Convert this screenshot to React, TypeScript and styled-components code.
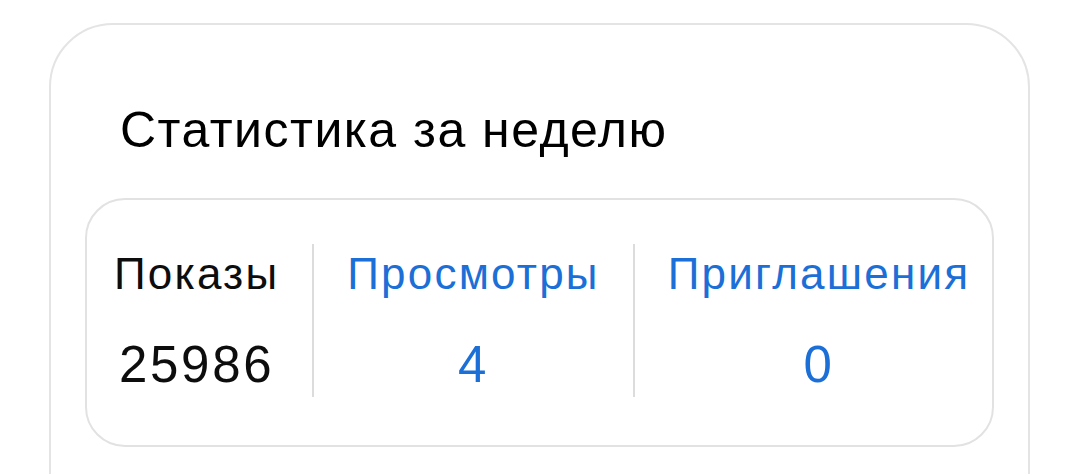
import React from "react";
import styled, { createGlobalStyle } from "styled-components";

const GlobalStyle = createGlobalStyle`
  html, body {
    margin: 0;
    padding: 0;
    background: #ffffff;
    overflow: hidden;
  }
  body {
    font-family: "Liberation Sans", Arial, sans-serif;
  }
`;

const Page = styled.div`
  padding: 23px 49px 0 49px;
  height: 474px;
  box-sizing: border-box;
`;

const Card = styled.section`
  border: 2px solid #e4e4e4;
  border-radius: 64px;
  padding: 80px 34px 0 34px;
  min-height: 520px;
  box-sizing: border-box;
`;

const Title = styled.h2`
  margin: 0 0 43px 0;
  padding-left: 35px;
  font-size: 50px;
  line-height: 50px;
  font-weight: 400;
  letter-spacing: 1.5px;
  color: #000;
`;

const StatsBox = styled.div`
  display: flex;
  border: 2px solid #e2e2e2;
  border-radius: 40px;
  padding: 44px 0 48px 0;
`;

const Column = styled.div<{ $divider?: boolean; $color: string }>`
  flex: 1 1 auto;
  display: flex;
  flex-direction: column;
  align-items: center;
  padding: 9px 33px 7px 33px;
  border-left: 2px solid ${(p) => (p.$divider ? "#dcdcdc" : "transparent")};
  color: ${(p) => p.$color};

  &:first-child {
    padding-left: 27px;
    border-left: none;
  }
`;

const Label = styled.div`
  font-size: 44px;
  line-height: 42px;
  letter-spacing: 2.2px;
  white-space: nowrap;
`;

const Value = styled.div`
  margin-top: 45px;
  font-size: 51px;
  line-height: 50px;
  letter-spacing: 2.7px;
`;

const stats = [
  { label: "Показы", value: "25986", color: "#0d0d0d" },
  { label: "Просмотры", value: "4", color: "#1b6fd6" },
  { label: "Приглашения", value: "0", color: "#1b6fd6" },
];

export default function App() {
  return (
    <>
      <GlobalStyle />
      <Page>
        <Card>
          <Title>Статистика за неделю</Title>
          <StatsBox>
            {stats.map((s, i) => (
              <Column key={s.label} $divider={i > 0} $color={s.color}>
                <Label>{s.label}</Label>
                <Value>{s.value}</Value>
              </Column>
            ))}
          </StatsBox>
        </Card>
      </Page>
    </>
  );
}
